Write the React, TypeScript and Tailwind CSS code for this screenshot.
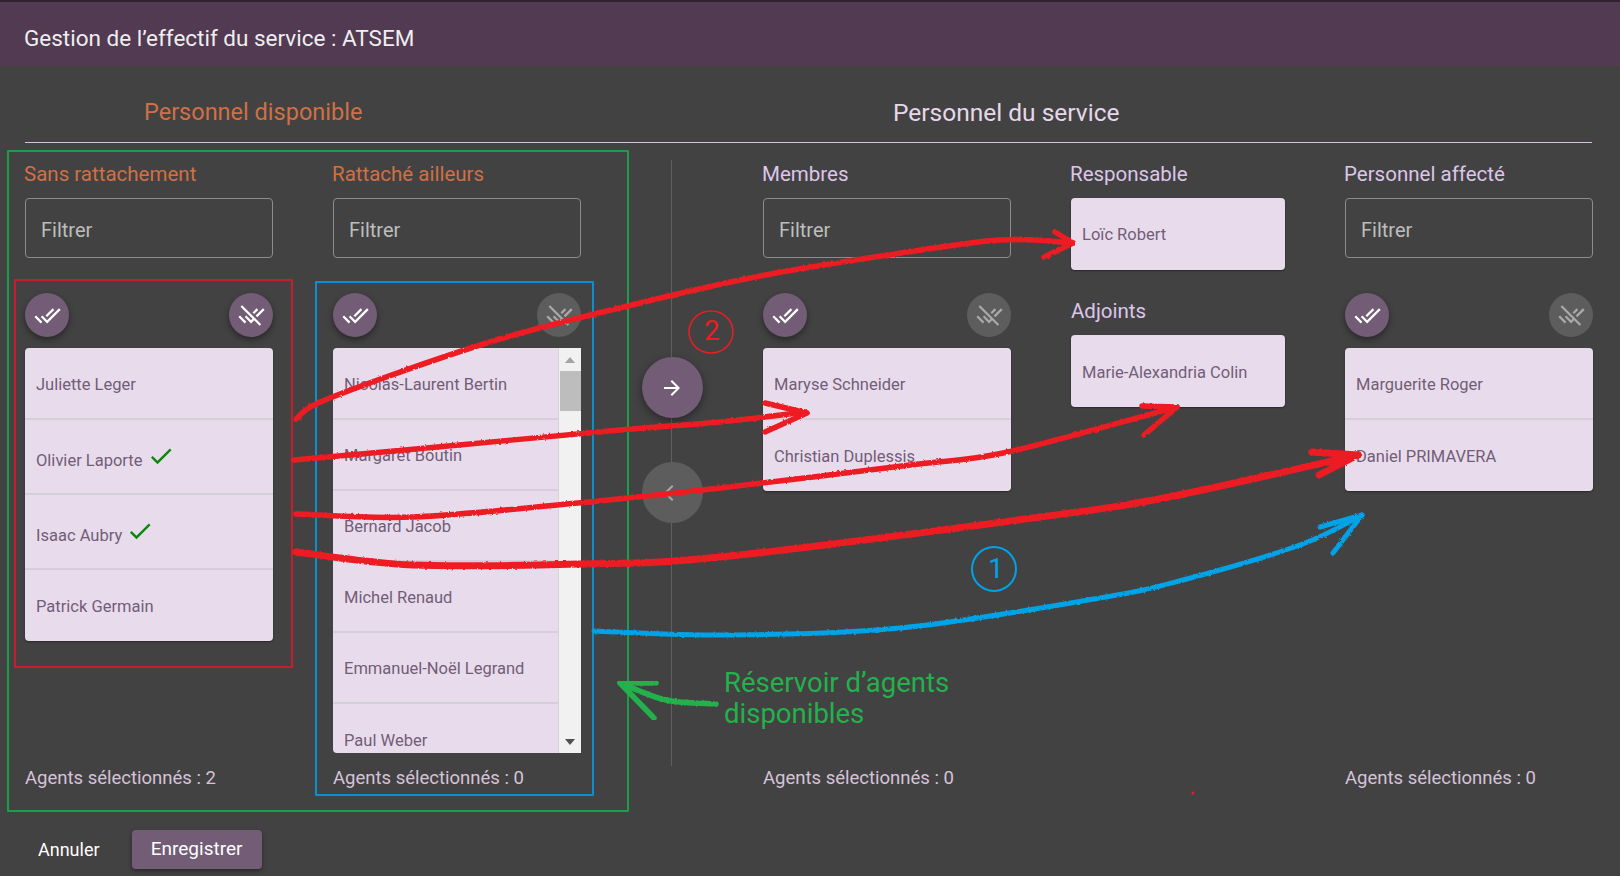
import { MdArrowBack, MdArrowForward, MdCheck, MdDoneAll, MdRemoveDone } from 'react-icons/md';
import { ReactNode } from 'react';

const RED = '#ed1c24';
const BLUE = '#00a2e8';
const GREEN = '#22b14c';

const CircleBtn = ({ disabled, children }: { disabled?: boolean; children: ReactNode }) => (
  <button
    className={
      disabled
        ? 'w-[44px] h-[44px] rounded-full bg-[#5d5d5d] text-[#a9a9a9] flex items-center justify-center'
        : 'w-[44px] h-[44px] rounded-full bg-[#735c75] text-white flex items-center justify-center shadow-[0_3px_6px_rgba(0,0,0,0.4)]'
    }
  >
    {children}
  </button>
);

const Item = ({ name, checked }: { name: string; checked?: boolean }) => (
  <div
    className={
      checked
        ? 'h-[75px] shrink-0 flex items-center gap-1 pt-[9px] px-[11px] border-b-2 border-[#d6ced9] last:border-b-0'
        : 'h-[71px] shrink-0 flex items-center gap-1 pt-[4px] px-[11px] border-b-2 border-[#d6ced9] last:border-b-0'
    }
  >
    <span>{name}</span>
    {checked && <MdCheck className="text-[#0a8a0a] -mt-[10px]" size={28} />}
  </div>
);

const Filter = () => (
  <div className="h-[60px] border border-[#8c8c8c] rounded-[4px] flex items-center pl-[15px] pt-[4px] text-[20px] text-[#bdbdbd]">
    Filtrer
  </div>
);

const Tools = ({ clear }: { clear?: boolean }) => (
  <div className="flex justify-between mt-[35px] mb-[11px]">
    <CircleBtn>
      <MdDoneAll size={27} />
    </CircleBtn>
    <CircleBtn disabled={!clear}>
      <MdRemoveDone size={27} />
    </CircleBtn>
  </div>
);

const Column = ({
  title,
  count,
  orange,
  clear,
  children,
}: {
  title: string;
  count: number;
  orange?: boolean;
  clear?: boolean;
  children: ReactNode;
}) => (
  <div className="w-[248px] shrink-0">
    <h3
      className={
        orange
          ? 'h-[54px] pt-[16px] -ml-[1px] leading-[28px] text-[20.5px] text-[#cf7046]'
          : 'h-[54px] pt-[16px] -ml-[1px] leading-[28px] text-[20.5px] text-[#dcc6ea]'
      }
    >
      {title}
    </h3>
    <Filter />
    <Tools clear={clear} />
    <div className="h-[405px] text-[16.5px] text-[#735c78]">{children}</div>
    <div className="mt-[13px] leading-[24px] text-[18.5px] text-[#d6c2da]">Agents sélectionnés : {count}</div>
  </div>
);

const ListBox = ({ children }: { children: ReactNode }) => (
  <div className="bg-[#e8dcec] rounded-[4px] pt-px overflow-hidden shadow-[0_1px_2px_rgba(0,0,0,0.4)]">{children}</div>
);

// catmull-rom, the pen strokes of the annotations
const smooth = (p: number[][]) => {
  let d = `M${p[0][0]} ${p[0][1]}`;
  for (let i = 0; i < p.length - 1; i++) {
    const a = p[Math.max(i - 1, 0)];
    const b = p[i];
    const c = p[i + 1];
    const e = p[Math.min(i + 2, p.length - 1)];
    d += ` C${b[0] + (c[0] - a[0]) / 6} ${b[1] + (c[1] - a[1]) / 6} ${c[0] - (e[0] - b[0]) / 6} ${c[1] - (e[1] - b[1]) / 6} ${c[0]} ${c[1]}`;
  }
  return d;
};

const Annotations = () => (
  <>
    <svg className="absolute inset-0 pointer-events-none" width={1620} height={876} fill="none" strokeLinecap="round" strokeLinejoin="round">
      <defs>
        <filter id="rough" x="-5%" y="-5%" width="110%" height="110%">
          <feTurbulence type="fractalNoise" baseFrequency="0.35" numOctaves={2} seed={3} />
          <feDisplacementMap in="SourceGraphic" scale={2.5} />
        </filter>
      </defs>
      <rect x={8} y={151} width={620} height={660} stroke="#1b9d49" strokeWidth={2} />
      <rect x={15} y={280} width={277} height={387} stroke="#c4202b" strokeWidth={2} />
      <rect x={316} y={282} width={277} height={513} stroke="#0b8fd0" strokeWidth={2} />

      <g stroke={RED} strokeWidth={5.5} filter="url(#rough)">
        <path d={smooth([[296, 419], [330, 398], [490, 342], [640, 303], [760, 276], [888, 255], [1000, 240], [1073, 243]])} />
        <path d="M1055 232 L1073 243 L1044 257" />
        <path d={smooth([[294, 460], [459, 445], [620, 430], [720, 422], [805, 412]])} />
        <path d="M765 403 L807 413 L765 432" />
        <path d={smooth([[296, 514], [413, 517], [578, 503], [720, 488], [910, 465], [1008, 452], [1177, 407]])} />
        <path d="M1142 406 L1177 407 L1144 435" />
        <path d={smooth([[296, 552], [413, 565], [578, 564], [720, 557], [1040, 517], [1169, 497], [1358, 455]])} strokeWidth={7} />
        <path d="M1312 452 L1358 455 L1319 475" strokeWidth={7} />
      </g>
      <g stroke={BLUE} strokeWidth={5} filter="url(#rough)">
        <path d={smooth([[594, 631], [720, 635], [900, 628], [1100, 598], [1183, 580], [1300, 545], [1362, 515]])} />
        <path d="M1320 527 L1362 515 L1333 553" />
      </g>
      <g stroke={GREEN} strokeWidth={5.5} filter="url(#rough)">
        <path d={smooth([[716, 704], [666, 700], [620, 683]])} />
        <path d="M656 683 L620 683 L654 718" />
      </g>
      <ellipse cx={711} cy={332} rx={22} ry={21} stroke={RED} strokeWidth={1.5} />
      <circle cx={994} cy={569} r={22} stroke={BLUE} strokeWidth={2} />
      <circle cx={1193} cy={793} r={1.5} fill={RED} />
    </svg>
    <span className="absolute left-[704px] top-[313px] leading-[36px] text-[28px] text-[#ed1c24]">2</span>
    <span className="absolute left-[988px] top-[551px] leading-[36px] text-[28px] text-[#00a2e8]">1</span>
    <div className="absolute left-[724px] top-[667px] leading-[31px] text-[27.5px] text-[#22b14c]">
      Réservoir d’agents
      <br />
      disponibles
    </div>
  </>
);

export default function App() {
  return (
    <div className="relative w-[1620px] h-[876px] overflow-hidden bg-[#424242] font-['Roboto',sans-serif]">
      <div className="h-[66px] border-t-2 border-[#2e2430] bg-[#513a52] flex items-center px-6 pt-[10px] text-[22.5px] text-[#eeeeee]">
        Gestion de l’effectif du service : ATSEM
      </div>

      <div className="px-[25px]">
        <div className="h-[77px] mr-[3px] flex items-center border-b border-[#d6c2da] pt-[18px] text-[23.5px]">
          <div className="w-[646px] pl-[119px] text-[#cf7046]">Personnel disponible</div>
          <div className="pl-[222px] text-[24.5px] text-[#e6d8ea]">Personnel du service</div>
        </div>

        <div className="flex pt-[1px]">
          <Column title="Sans rattachement" count={2} orange clear>
            <ListBox>
              <Item name="Juliette Leger" />
              <Item name="Olivier Laporte" checked />
              <Item name="Isaac Aubry" checked />
              <Item name="Patrick Germain" />
            </ListBox>
          </Column>

          <div className="w-[60px] shrink-0" />

          <Column title="Rattaché ailleurs" count={0} orange>
            <div className="h-full flex bg-[#e8dcec] rounded-l-[4px] overflow-hidden">
              <div className="flex-1 h-full pt-px overflow-hidden">
                <Item name="Nicolas-Laurent Bertin" />
                <Item name="Margaret Boutin" />
                <Item name="Bernard Jacob" />
                <Item name="Michel Renaud" />
                <Item name="Emmanuel-Noël Legrand" />
                <Item name="Paul Weber" />
              </div>
              <div className="w-[23px] shrink-0 bg-[#f1f1f1] border-l border-[#d4d4d4] flex flex-col items-center">
                <div className="h-[23px] flex items-center justify-center">
                  <div className="w-0 h-0 border-x-[5px] border-x-transparent border-b-[6px] border-b-[#a3a3a3]" />
                </div>
                <div className="w-[21px] h-[40px] bg-[#bdbdbd]" />
                <div className="mt-auto h-[23px] flex items-center justify-center">
                  <div className="w-0 h-0 border-x-[5px] border-x-transparent border-t-[6px] border-t-[#505050]" />
                </div>
              </div>
            </div>
          </Column>

          <div className="w-[182px] shrink-0 relative flex flex-col items-center">
            <div className="absolute top-[16px] bottom-[24px] left-[90px] w-px bg-[#5f5f5f]" />
            <button className="relative mt-[213px] w-[61px] h-[61px] rounded-full bg-[#735c75] text-white flex items-center justify-center shadow-[0_3px_8px_rgba(0,0,0,0.4)]">
              <MdArrowForward size={24} />
            </button>
            <button className="relative mt-[44px] w-[61px] h-[61px] rounded-full bg-[#5d5d5d] text-[#a9a9a9] flex items-center justify-center">
              <MdArrowBack size={24} />
            </button>
          </div>

          <Column title="Membres" count={0}>
            <ListBox>
              <Item name="Maryse Schneider" />
              <Item name="Christian Duplessis" />
            </ListBox>
          </Column>

          <div className="w-[60px] shrink-0" />

          <div className="w-[214px] shrink-0">
            <h3 className="h-[54px] pt-[16px] leading-[28px] text-[20.5px] text-[#dcc6ea] -ml-[1px]">Responsable</h3>
            <div className="h-[72px] bg-[#e8dcec] rounded-[4px] flex items-center px-[11px] pt-[2px] text-[16.5px] text-[#735c78] shadow-[0_1px_2px_rgba(0,0,0,0.4)]">
              Loïc Robert
            </div>
            <h3 className="mt-[27px] h-[28px] leading-[28px] text-[20.5px] text-[#dcc6ea]">Adjoints</h3>
            <div className="mt-[10px] h-[72px] bg-[#e8dcec] rounded-[4px] flex items-center px-[11px] pt-[4px] text-[16.5px] text-[#735c78] shadow-[0_1px_2px_rgba(0,0,0,0.4)]">
              Marie-Alexandria Colin
            </div>
          </div>

          <div className="w-[60px] shrink-0" />

          <Column title="Personnel affecté" count={0}>
            <ListBox>
              <Item name="Marguerite Roger" />
              <Item name="Daniel PRIMAVERA" />
            </ListBox>
          </Column>
        </div>

        <div className="mt-[40px] flex items-center">
          <button className="ml-[13px] text-[18px] text-white">Annuler</button>
          <button className="ml-[32px] w-[130px] h-[39px] rounded-[4px] bg-[#735c75] text-[19px] text-white shadow-[0_2px_4px_rgba(0,0,0,0.4)]">
            Enregistrer
          </button>
        </div>
      </div>

      <Annotations />
    </div>
  );
}
